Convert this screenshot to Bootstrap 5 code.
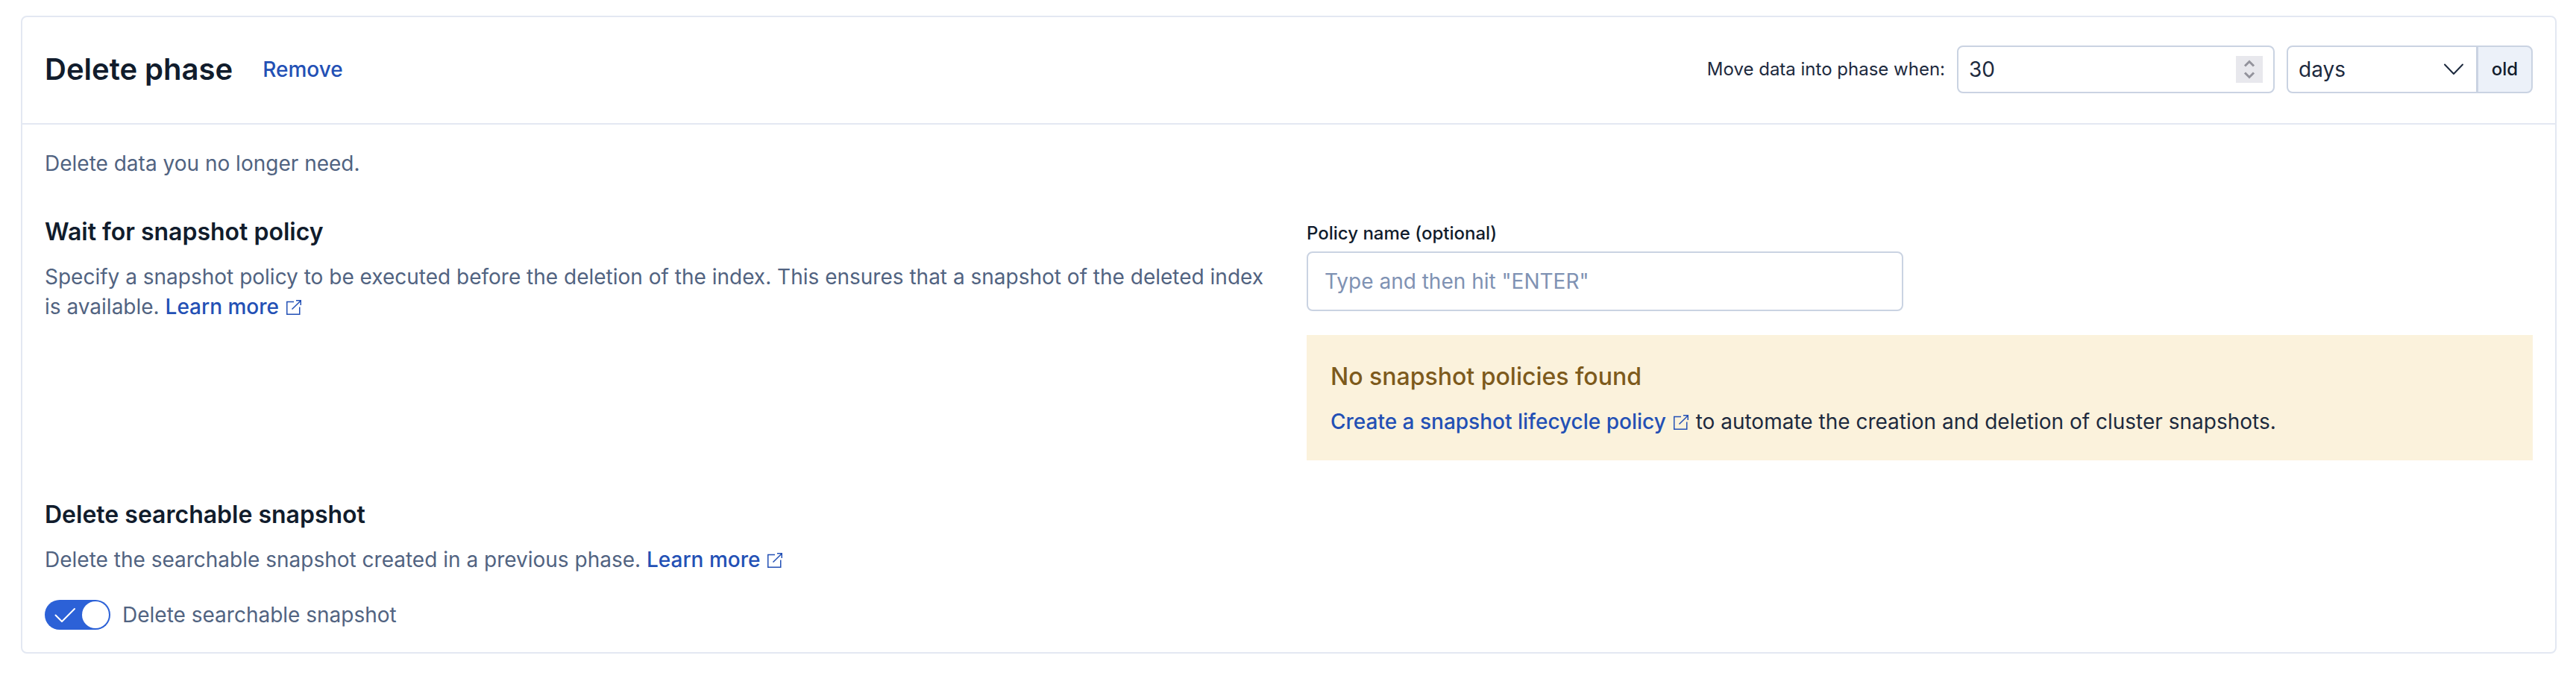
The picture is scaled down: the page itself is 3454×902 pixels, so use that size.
<!DOCTYPE html>
<html lang="en">
<head>
<meta charset="utf-8">
<meta name="viewport" content="width=device-width, initial-scale=1">
<title>Delete phase</title>
<link href="https://cdn.jsdelivr.net/npm/bootstrap@5.3.0/dist/css/bootstrap.min.css" rel="stylesheet">
<style>
  body {
    font-family: Inter, "Liberation Sans", sans-serif;
    font-size: 28px;
    line-height: 40px;
    color: #1d2a3e;
    background: #fff;
    padding: 21px 26px 26px 28px;
  }
  .phase-panel { border: 2px solid #e3e8f2; border-radius: 8px; }
  .phase-header { padding: 38px 30px 40px; border-bottom: 2px solid #e3e8f2; }
  .phase-body { padding: 32px 30px 30px; }
  .phase-title { font-size: 40px; line-height: 48px; font-weight: 600; color: #111c2c; }
  .field-title { font-size: 32px; line-height: 48px; font-weight: 600; color: #111c2c; margin-bottom: 16px; }
  .subdued { color: #516381; }
  .link-strong, .link-strong:hover { color: #2350b5; font-weight: 500; text-decoration: none; }
  .remove-btn { border: 0; padding: 0; background: none; margin-left: 40px; }
  .text-label { font-size: 24px; line-height: 32px; }
  .text-label-strong { font-size: 24px; line-height: 32px; font-weight: 500; color: #111c2c; }
  .age-gap { gap: 16px; }
  .form-control, .form-select, .input-group-text {
    border: 2px solid #cad3e2;
    border-radius: 8px;
    color: #1d2a3e;
    font-size: 28px;
    line-height: 40px;
  }
  .age-field { width: 426px; }
  .age-field .form-control { height: 64px; padding: 10px 64px 10px 14px; appearance: textfield; -moz-appearance: textfield; }
  .age-field input::-webkit-inner-spin-button { -webkit-appearance: none; margin: 0; }
  .stepper { right: 16px; top: 14px; width: 36px; height: 36px; background: #e8e8ed; pointer-events: none; }
  .stepper svg { display: block; }
  .unit-field { width: 330px; height: 64px; }
  .unit-field .form-select {
    padding: 10px 60px 10px 14px;
    background-image: url("data:image/svg+xml,%3Csvg xmlns='http://www.w3.org/2000/svg' viewBox='0 0 28 16'%3E%3Cpath d='M2 1.5 14 14 26 1.5' fill='none' stroke='%231d2a3e' stroke-width='2' stroke-linecap='round' stroke-linejoin='round'/%3E%3C/svg%3E");
    background-size: 28px 16px;
    background-position: right 16px center;
  }
  .unit-field .input-group-text { width: 75px; padding: 0; justify-content: center; background: #ecf1f9; color: #111c2c; font-size: 24px; font-weight: 500; }
  .unit-field > label.input-group-text { margin-left: -2px; }
  .policy-field { max-width: 800px; height: 80px; padding: 18px 22px; }
  .policy-field::placeholder { color: #7f92b3; opacity: 1; }
  .policy-label { display: block; padding-top: 10px; margin-bottom: 8px; }
  .field-row { --bs-gutter-x: 48px; margin-bottom: 49px; }
  .notice { background: #fbf2dc; padding: 32px; margin-top: 32px; }
  .notice-title { font-size: 32px; line-height: 48px; font-weight: 500; color: #7d5a1c; margin-bottom: 16px; }
  .popout { width: 24px; height: 24px; margin-left: 8px; vertical-align: -3px; }
  .switch-line { margin-top: 34px; gap: 16px; }
  .form-check-input.switch-input {
    width: 88px; height: 40px; margin: 0; border: 0; border-radius: 20px;
    background-color: #2c61d7;
    background-image: url("data:image/svg+xml,%3Csvg xmlns='http://www.w3.org/2000/svg' viewBox='0 0 88 40'%3E%3Cpath d='M14.5 20.5 23 29 40 12' fill='none' stroke='%23fff' stroke-width='2' stroke-linecap='round' stroke-linejoin='round'/%3E%3Ccircle cx='68' cy='20' r='18' fill='%23fff'/%3E%3C/svg%3E");
    background-position: center; background-size: 88px 40px;
  }
</style>
</head>
<body>
<svg class="d-none" aria-hidden="true">
  <symbol id="popout" viewBox="0 0 24 24">
    <path d="M12 4.500H2.750V21.250H19.750V11.500M9.500 14.500 21 3.250M15 2.750H21.250V9" fill="none" stroke="currentColor" stroke-width="1.500"/>
  </symbol>
</svg>

<main class="phase-panel">
  <header class="phase-header d-flex justify-content-between align-items-start">
    <div class="d-flex align-items-center pt-2">
      <h1 class="phase-title m-0">Delete phase</h1>
      <button type="button" class="remove-btn link-strong">Remove</button>
    </div>
    <div class="d-flex align-items-center age-gap">
      <label class="text-label" for="age">Move data into phase when:</label>
      <div class="age-field position-relative">
        <input type="number" class="form-control" id="age" value="30">
        <div class="stepper position-absolute">
          <svg width="36" height="36" viewBox="0 0 36 36" aria-hidden="true"><path d="M12 13.500 18 7.500 24 13.500M12 22.500 18 28.500 24 22.500" fill="none" stroke="#93939c" stroke-width="3"/></svg>
        </div>
      </div>
      <div class="input-group unit-field">
        <select class="form-select" id="unit" aria-label="Age unit"><option>days</option><option>hours</option><option>minutes</option></select>
        <label class="input-group-text" for="unit">old</label>
      </div>
    </div>
  </header>

  <div class="phase-body">
    <p class="subdued mb-5">Delete data you no longer need.</p>

    <div class="row field-row">
      <section class="col-6">
        <h2 class="field-title">Wait for snapshot policy</h2>
        <p class="subdued m-0">Specify a snapshot policy to be executed before the deletion of the index. This ensures that a snapshot of the deleted index is available. <a href="#" class="link-strong text-nowrap">Learn more<svg class="popout" aria-hidden="true"><use href="#popout"/></svg></a></p>
      </section>
      <div class="col-6">
        <label class="policy-label text-label-strong" for="policy">Policy name (optional)</label>
        <input type="text" class="form-control policy-field" id="policy" placeholder="Type and then hit &quot;ENTER&quot;">
        <div class="notice">
          <p class="notice-title">No snapshot policies found</p>
          <p class="m-0"><a href="#" class="link-strong">Create a snapshot lifecycle policy<svg class="popout" aria-hidden="true"><use href="#popout"/></svg></a> to automate the creation and deletion of cluster snapshots.</p>
        </div>
      </div>
    </div>

    <section>
      <h2 class="field-title">Delete searchable snapshot</h2>
      <p class="subdued m-0">Delete the searchable snapshot created in a previous phase. <a href="#" class="link-strong text-nowrap">Learn more<svg class="popout" aria-hidden="true"><use href="#popout"/></svg></a></p>
      <div class="switch-line d-flex align-items-center">
        <input class="form-check-input switch-input" type="checkbox" role="switch" id="delete-snapshot" checked>
        <label class="subdued" for="delete-snapshot">Delete searchable snapshot</label>
      </div>
    </section>
  </div>
</main>
<script src="https://cdn.jsdelivr.net/npm/bootstrap@5.3.0/dist/js/bootstrap.bundle.min.js"></script>
</body>
</html>
